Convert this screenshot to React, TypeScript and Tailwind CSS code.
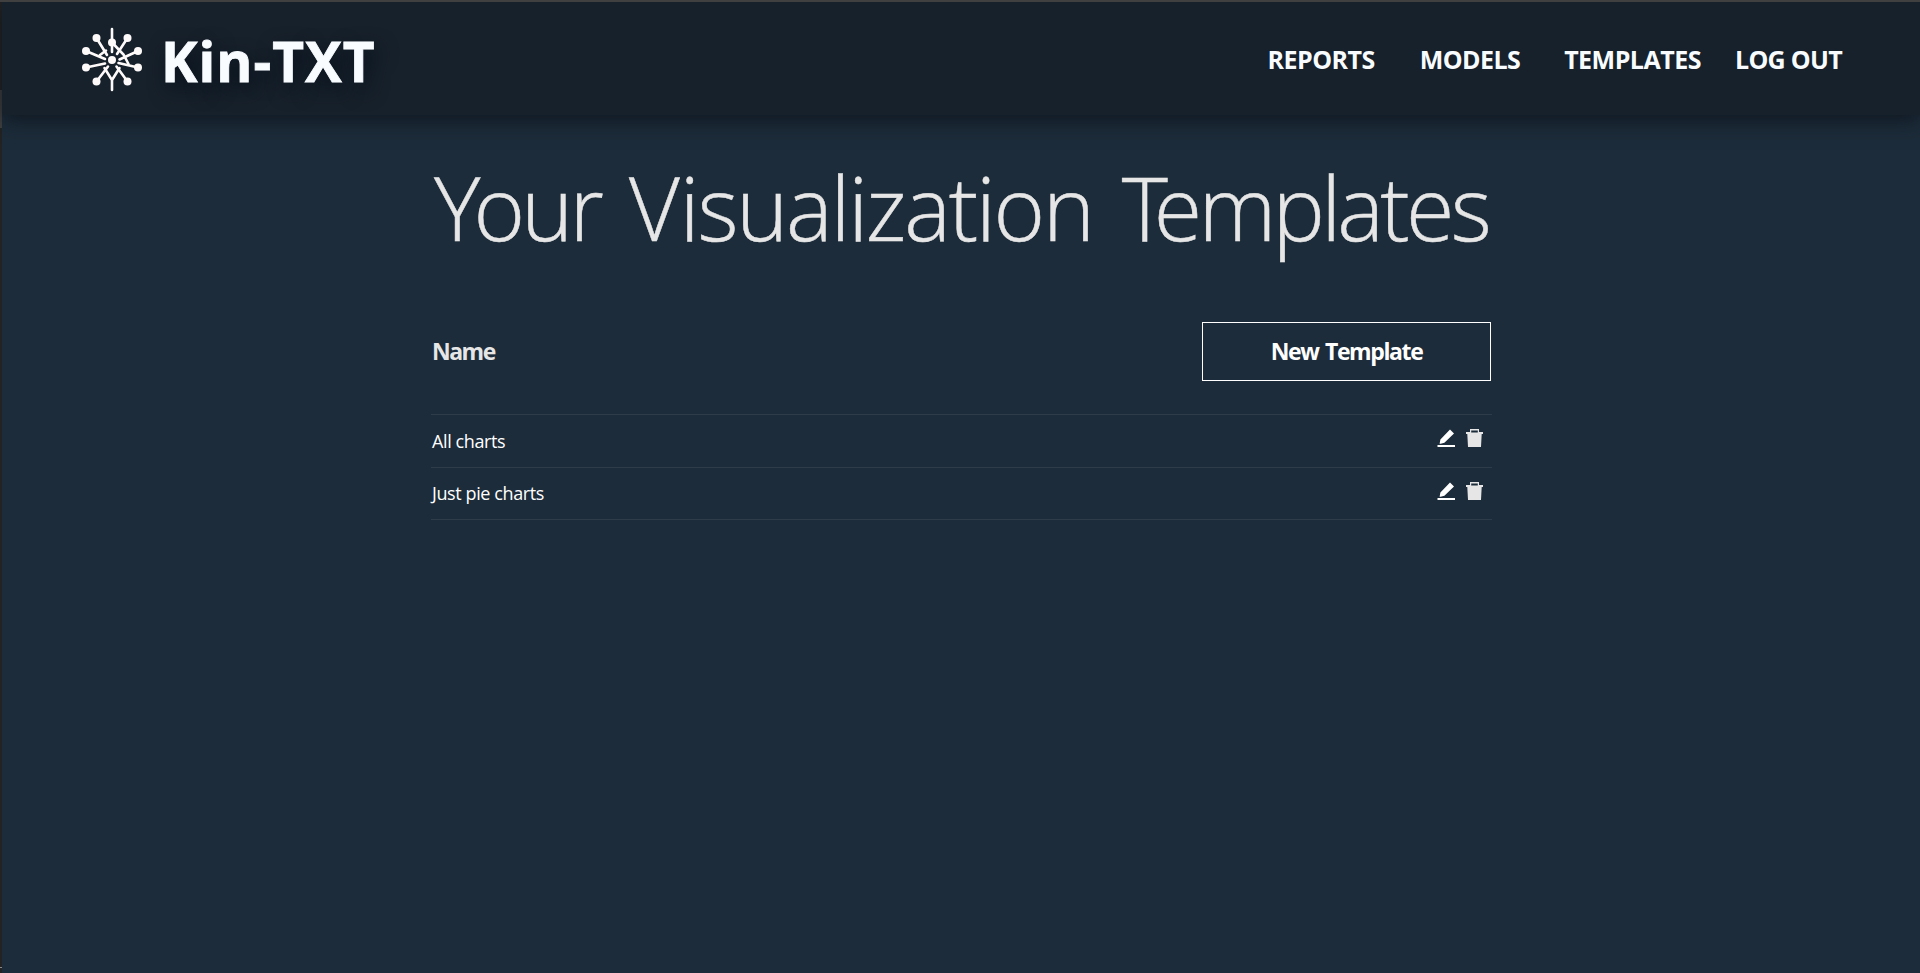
const navItems = [
  { label: 'REPORTS', style: 'ml-0 tracking-[-0.5px]' },
  { label: 'MODELS', style: 'ml-[45px] tracking-[-0.6px]' },
  { label: 'TEMPLATES', style: 'ml-[44px] tracking-[-0.5px]' },
  { label: 'LOG OUT', style: 'ml-[34px] tracking-[-0.7px]' },
];

const templates = ['All charts', 'Just pie charts'];

function Logo() {
  return (
    <svg width="62" height="66" viewBox="0 0 62 66" className="mt-px shrink-0" fill="none" stroke="#fffafa" strokeWidth="2.6" strokeLinecap="round">
      <path d="M31 3V26M31 64V54L23.5 42M31 54L38.5 42" />
      <path d="M15.5 12L26 29M5 25L24 33M5 41.5L24 37.5M15.5 55.5L27 40.5" />
      <path d="M46.5 12L36 28M57 25L38.5 33.5M57 41.5L37.5 37M46.5 55.5L35.5 40.5" />
      <path d="M31 16.5L42.5 28.5L47.5 38M19 29L25 24.5" />
      <g fill="#fffafa" stroke="none">
        <circle cx="31" cy="34" r="4" />
        <circle cx="31" cy="16.5" r="4" />
        <circle cx="15.5" cy="12" r="4" />
        <circle cx="46.5" cy="12" r="4" />
        <circle cx="5" cy="25" r="4" />
        <circle cx="57" cy="25" r="4" />
        <circle cx="5" cy="41.5" r="4" />
        <circle cx="57" cy="41.5" r="4" />
        <circle cx="15.5" cy="55.5" r="4" />
        <circle cx="46.5" cy="55.5" r="4" />
      </g>
    </svg>
  );
}

function PencilIcon() {
  return (
    <svg width="18" height="18" viewBox="0 0 18 18" fill="#ffffff">
      <path d="M0.5 16H18V18H0.5zM2.6 14.8L3.4 10.6L13 0.6L17 4.4L7.4 13.8L3.6 14.8z" />
    </svg>
  );
}

function TrashIcon() {
  return (
    <svg width="17" height="18" viewBox="0 0 17 18" fill="#e6e6e6">
      <path fillRule="evenodd" d="M4 0H13V3H17V5H15.7L15 18H2L1.3 5H0V3H4zM5.2 1.6V3.6H11.8V1.6z" />
    </svg>
  );
}

export default function App() {
  return (
    <div className="flex h-[973px] w-full flex-col overflow-hidden border-t-2 border-t-[#404040] bg-[#1d2c3a] font-['Open_Sans','Noto_Sans',sans-serif] text-white">
      <div className="flex min-h-0 flex-1">
        <div className="flex w-[2px] shrink-0 flex-col bg-[#232323]">
          <div className="mt-[88px] h-[38px] bg-[#404040]" />
          <div className="mt-auto mb-[5px] h-px bg-[#8a8a8a]" />
        </div>
        <div className="flex min-w-0 flex-1 flex-col">
          <header className="flex h-[113px] shrink-0 items-center justify-between bg-[#17212b] pr-[78px] pl-[79px] shadow-[0_5px_20px_rgba(10,16,24,0.75)]">
            <div className="flex items-center">
              <Logo />
              <span className="ml-[18px] pt-[4px] text-[55px] leading-none font-bold tracking-[1px] whitespace-nowrap text-[#f8fcff] [-webkit-text-stroke:0.8px_#f8fcff] [text-shadow:4px_8px_20px_#060f1a]">Kin-TXT</span>
            </div>
            <nav className="flex items-center pt-[2px] text-[25px] leading-none font-bold whitespace-nowrap text-[#f8fcff]">
              {navItems.map((item) => (
                <a key={item.label} className={item.style}>{item.label}</a>
              ))}
            </nav>
          </header>
          <main className="ml-[429px] flex w-[1061px] flex-col">
            <h1 className="mt-[38px] h-[123px] pl-[3px] text-[88px] leading-[108px] font-light whitespace-nowrap text-[#e6e6e6] [-webkit-text-stroke:0.5px_#e6e6e6]">
              <span className="tracking-[-7px]">Y</span>
              <span className="tracking-[-3.7px]">our</span>{' '}
              <span className="ml-[6px]">V</span>
              <span className="tracking-[-2.2px]">isualization</span>{' '}
              <span className="ml-[6px] tracking-[-14px]">T</span>
              <span className="tracking-[-3.7px]">emplates</span>
            </h1>
            <div className="mt-[46px] flex h-[59px] items-center justify-between pr-px">
              <h2 className="pl-px text-[23px] leading-none font-bold tracking-[-1.5px] text-[#e6e6e6]">Name</h2>
              <button className="h-[59px] w-[289px] border border-white text-[23px] leading-none font-bold tracking-[-1.4px] [word-spacing:2px] whitespace-nowrap">New Template</button>
            </div>
            <ul className="mt-[33px] border-t border-[#2e3b48]">
              {templates.map((name, i) => (
                <li key={name} className={i === 0 ? 'flex h-[53px] justify-between border-b border-[#2e3b48] pr-[9px] pl-px' : 'flex h-[52px] justify-between border-b border-[#2e3b48] pr-[9px] pl-px'}>
                  <span className={i === 0 ? 'pt-[14px] text-[18px] leading-[25px] tracking-[-0.4px]' : 'pt-[13px] text-[18px] leading-[25px] tracking-[-0.4px]'}>{name}</span>
                  <span className="flex gap-[11px] pt-[14px]">
                    <PencilIcon />
                    <TrashIcon />
                  </span>
                </li>
              ))}
            </ul>
          </main>
        </div>
      </div>
    </div>
  );
}
